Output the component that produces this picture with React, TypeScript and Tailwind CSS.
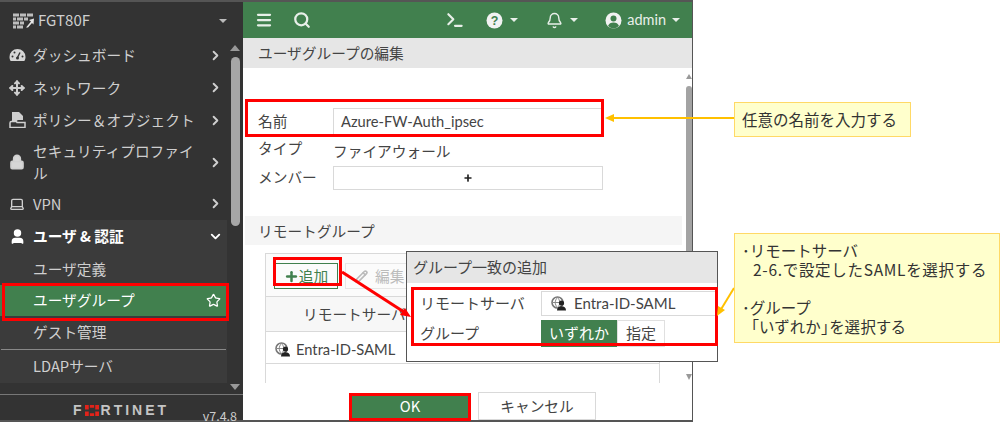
import { ChevronRight, ChevronDown, Search, Menu, Bell, Terminal, Star, Plus, Pencil, Move, Lock, Laptop, User } from 'lucide-react';
import type { ReactNode } from 'react';

function Caret({ className }: { className?: string }) {
  return <span className={`inline-block border-x-[4px] border-t-[4px] border-x-transparent border-t-current ${className ?? ''}`} />;
}

function ServerIcon() {
  return (
    <svg width="17" height="15" viewBox="0 0 17 15" className="shrink-0">
      <circle cx="6.5" cy="6.5" r="5.5" fill="#fff" stroke="#777" strokeWidth="1.6" />
      <path d="M2 6.5h9M6.5 1.5c-3 3-3 7 0 10M6.5 1.5c3 3 3 7 0 10" fill="none" stroke="#888" strokeWidth="1" />
      <circle cx="10.5" cy="7" r="2.6" fill="#222" />
      <path d="M6 14.5c0-3 2-4.2 4.5-4.2s4.5 1.2 4.5 4.2z" fill="#222" />
    </svg>
  );
}

function NavRow({ icon, label, open, bold, twoLine }: { icon: ReactNode; label: ReactNode; open?: boolean; bold?: boolean; twoLine?: boolean }) {
  return (
    <div className={`flex items-center pl-[9px] pr-[4px] ${twoLine ? 'h-[51px]' : 'h-[32.5px]'} ${bold ? 'bg-[#3b3b3b] font-bold text-white' : 'text-[#cfcfcf]'}`}>
      <span className="flex w-[24px] shrink-0 items-center">{icon}</span>
      <span className="flex-1 pr-[10px] text-[14.7px] leading-[22px]">{label}</span>
      {open ? <ChevronDown size={15} strokeWidth={3} /> : <ChevronRight size={15} strokeWidth={3} />}
    </div>
  );
}

function Sidebar() {
  return (
    <aside className="flex h-full w-[243px] shrink-0 flex-col bg-[#333333] text-[#cfcfcf]">
      <div className="flex h-[37px] shrink-0 items-center pl-[13px] pr-[16px]">
        <svg width="21" height="18" viewBox="0 0 21 17" className="mr-[4px]" fill="#bdbdbd">
          <path d="M0 1h6v3H0zM7 1h6v3H7zM14 1h6v3h-6zM0 5h3v3H0zM4 5h6v3H4zM11 5h4v3h-4zM0 9h6v3H0zM7 9h4v3H7zM0 13h3v3H0zM4 13h6v3H4z" />
          <path d="M13 15l5-6-2-1.500 5-1.500-.5 6-1.500-1.500-4 4.500z" fill="#e6e6e6" />
        </svg>
        <span className="flex-1 text-[15px]">FGT80F</span>
        <Caret className="text-[#bbb]" />
      </div>
      <div className="flex min-h-0 flex-1">
        <nav className="min-w-0 flex-1 overflow-hidden">
          <NavRow
            icon={
              <svg width="17" height="14" viewBox="0 0 17 14" fill="#d6d6d6">
                <path d="M8.500 1a8 8 0 0 0-8 8c0 1.700.5 3 1.200 4h13.600c.7-1 1.200-2.300 1.200-4a8 8 0 0 0-8-8z" />
                <path d="M8.500 9.500L11 4.500" stroke="#333" strokeWidth="1.400" />
                <circle cx="3.500" cy="8.500" r="1" fill="#333" />
                <circle cx="5.500" cy="4.500" r="1" fill="#333" />
                <circle cx="13.500" cy="8.500" r="1" fill="#333" />
                <circle cx="8.500" cy="10" r="1.500" fill="#333" />
              </svg>
            }
            label="ダッシュボード"
          />
          <NavRow icon={<Move size={16} strokeWidth={3} />} label="ネットワーク" />
          <NavRow
            icon={
              <svg width="17" height="16" viewBox="0 0 17 16" fill="#cfcfcf">
                <path d="M3 0h7l4 4v4H9.500c-1.500 0-2 1-2 2H3z" />
                <path d="M1 11c0-1 .5-1.500 1.500-1.500h5l.5 1h8v5H1z" fill="none" stroke="#cfcfcf" strokeWidth="1.500" />
              </svg>
            }
            label="ポリシー＆オブジェクト"
          />
          <NavRow icon={<Lock size={16} strokeWidth={2.5} fill="#d6d6d6" />} label="セキュリティプロファイル" twoLine />
          <NavRow icon={<Laptop size={16} strokeWidth={2} />} label="VPN" />
          <NavRow icon={<User size={17} strokeWidth={2.5} fill="#fff" />} label="ユーザ & 認証" open bold />
          <div className="bg-[#3b3b3b] text-[14.7px]">
            <div className="flex h-[32.5px] items-center pl-[33px]">ユーザ定義</div>
            <div className="flex h-[31px] items-center justify-between bg-[#41804e] pl-[33px] pr-[6px] text-white">
              ユーザグループ
              <Star size={15} strokeWidth={2} />
            </div>
            <div className="flex h-[33px] items-center pl-[33px]">ゲスト管理</div>
            <div className="mx-[1px] h-px bg-[#888]" />
            <div className="flex h-[33px] items-center pl-[33px]">LDAPサーバ</div>
          </div>
        </nav>
        <div className="flex w-[16px] shrink-0 flex-col items-center bg-[#333333] text-[#999]">
          <span className="mt-[6px] border-x-[5px] border-b-[6px] border-x-transparent border-b-[#999]" />
          <span className="mt-[6px] h-[169px] w-[9px] rounded-full bg-[#a6a6a6]" />
          <span className="mt-auto mb-[4px] border-x-[5px] border-t-[6px] border-x-transparent border-t-[#999]" />
        </div>
      </div>
      <div className="flex h-[26px] shrink-0 items-end justify-between border-t border-[#777] pl-[73px] pr-[6px]">
        <span className="mb-[2px] flex items-center font-['Liberation_Sans',sans-serif] text-[14px] font-bold leading-[16px] tracking-[3px] text-[#c4c4c4]">
          F
          <svg width="14" height="11" viewBox="0 0 13 10" className="mr-[2px]" fill="#e2231a">
            <path d="M0 0h3.500v4H0zM4.500 0h4v2.500h-4zM9.500 0H13v4H9.500zM0 6h3.500v4H0zM4.500 7.500h4V10h-4zM9.500 6H13v4H9.500z" />
          </svg>
          RTINET
        </span>
        <span className="mb-[-3px] text-[12.5px] leading-[15px] text-[#ccc]">v7.4.8</span>
      </div>
    </aside>
  );
}

function TopBar() {
  return (
    <header className="flex h-[36px] shrink-0 items-center bg-[#41804e] pl-[12px] pr-[12px] text-[#e8efe9]">
      <Menu size={18} strokeWidth={3} />
      <Search size={18} strokeWidth={3} className="ml-[20px]" />
      <Terminal size={20} strokeWidth={2.5} className="ml-auto" />
      <svg width="17" height="17" viewBox="0 0 17 17" className="ml-[21px]">
        <circle cx="8.500" cy="8.500" r="8" fill="#f2f2f2" />
        <text x="8.500" y="13" textAnchor="middle" fontSize="12.500" fontWeight="700" fill="#41804e" fontFamily="Liberation Sans">?</text>
      </svg>
      <Caret className="ml-[7px]" />
      <Bell size={17} strokeWidth={2} className="ml-[28px]" />
      <Caret className="ml-[7px]" />
      <svg width="17" height="17" viewBox="0 0 17 17" className="ml-[27px]">
        <circle cx="8.500" cy="8.500" r="8" fill="#f2f2f2" />
        <circle cx="8.500" cy="6.500" r="3" fill="#41804e" />
        <path d="M3 14c.8-2.500 3-3.500 5.500-3.500s4.700 1 5.500 3.500a7.500 7.500 0 0 1-11 0z" fill="#41804e" />
      </svg>
      <span className="ml-[5px] font-['Lato',sans-serif] text-[14.5px]">admin</span>
      <Caret className="ml-[6px]" />
    </header>
  );
}

function Form() {
  return (
    <div className="relative min-h-0 flex-1 overflow-hidden bg-white text-[14.7px] text-[#444]">
      <div className="flex h-[30px] items-center bg-[#e6e6e6] pl-[15px]">ユーザグループの編集</div>
      <div className="mt-[40px] flex h-[27px] items-center pl-[15px]">
        <span className="w-[75px]">名前</span>
        <div className="flex h-[27px] w-[270px] items-center border border-[#d9d9d9] pl-[7px] font-['Lato',sans-serif]">Azure-FW-Auth_ipsec</div>
      </div>
      <div className="mt-[2px] flex h-[26px] items-center pl-[15px]">
        <span className="mb-[3px] w-[75px]">タイプ</span>
        <span className="mt-[2px]">ファイアウォール</span>
      </div>
      <div className="mt-[2px] flex h-[25px] items-center pl-[15px]">
        <span className="w-[75px]">メンバー</span>
        <div className="flex h-[24px] w-[270px] items-center justify-center border border-[#d9d9d9] text-[#222]">
          <Plus size={10} strokeWidth={4} />
        </div>
      </div>
      <div className="ml-[2px] mr-[10px] mt-[26px] flex h-[29px] items-center bg-[#f5f5f5] pl-[13px] pt-[1px]">リモートグループ</div>
      <div className="ml-[22px] mr-[32px] mt-[8px] border border-[#d9d9d9]">
        <div className="flex h-[42px] items-center gap-[7px] bg-[#fbfbfb] pl-[8px] pt-[2px]">
          <div className="flex h-[26px] w-[64px] items-center justify-center border border-[#41804e] text-[#41804e]">
            <Plus size={15} strokeWidth={4} />
            追加
          </div>
          <div className="flex h-[26px] w-[70px] items-center gap-[7px] border border-[#e6e6e6] pl-[9px] text-[#bbb]">
            <Pencil size={13} strokeWidth={3} />
            編集
          </div>
        </div>
        <div className="flex h-[36px] items-center border-y border-[#d9d9d9] bg-[#f7f7f7] pl-[37px] pt-[1px]">リモートサーバ</div>
        <div className="flex h-[32px] items-center gap-[4px] border-b border-[#d9d9d9] pl-[9px] pt-[3px] font-['Lato',sans-serif]">
          <ServerIcon />
          Entra-ID-SAML
        </div>
        <div className="h-[60px]" />
      </div>
    </div>
  );
}

function MainScrollbar() {
  return (
    <div className="absolute right-0 top-[72px] flex h-[306px] w-[6px] flex-col items-center">
      <span className="border-x-[3px] border-b-[5px] border-x-transparent border-b-[#999]" />
      <span className="mt-[7px] h-[262px] w-[6px] rounded-t-full bg-[#a3a3a3]" />
      <span className="mt-auto border-x-[3px] border-t-[6px] border-x-transparent border-t-[#999]" />
    </div>
  );
}

function Main() {
  return (
    <main className="relative flex h-full w-[450px] shrink-0 flex-col border-r border-[#555] bg-white">
      <TopBar />
      <Form />
      <MainScrollbar />
      <footer className="flex h-[37px] shrink-0 items-end justify-center gap-[10px] bg-white pl-[13px] text-[14.7px]">
        <button className="h-[27px] w-[116px] bg-[#41804e] text-white">OK</button>
        <button className="h-[28px] w-[118px] border border-[#d9d9d9] text-[#444]">キャンセル</button>
      </footer>
    </main>
  );
}

function Dialog() {
  return (
    <div className="absolute left-[406px] top-[251px] h-[111px] w-[312px] border border-[#555] bg-white text-[15px] text-[#444]">
      <div className="flex h-[31px] items-center bg-[#e6e6e6] pl-[6px]">グループ一致の追加</div>
      <div className="mt-[8px] flex h-[25px] items-center">
        <span className="w-[134px] pl-[13px]">リモートサーバ</span>
        <div className="flex h-[25px] flex-1 items-center gap-[6px] border border-[#d9d9d9] pl-[9px] font-['Lato',sans-serif]">
          <ServerIcon />
          Entra-ID-SAML
        </div>
      </div>
      <div className="mt-[4px] flex h-[27px] items-center">
        <span className="w-[134px] pl-[13px]">グループ</span>
        <div className="flex h-[27px] w-[76px] items-center justify-center bg-[#41804e] text-white">いずれか</div>
        <div className="flex h-[27px] w-[48px] items-center justify-center border border-[#e0e0e0]">指定</div>
      </div>
    </div>
  );
}

function RedBox({ className }: { className: string }) {
  return <div className={`absolute border-[3px] border-[#ff0000] ${className}`} />;
}

function Note({ className, children }: { className: string; children: ReactNode }) {
  return <div className={`absolute border-[1.5px] border-[#ffd966] bg-[#ffffcc] text-[15.5px] text-[#333] ${className}`}>{children}</div>;
}

function Annotations() {
  return (
    <>
      <RedBox className="left-[245px] top-[99px] h-[38px] w-[359px]" />
      <RedBox className="left-[2px] top-[283px] h-[38px] w-[227px]" />
      <RedBox className="left-[273px] top-[257px] h-[29px] w-[69px]" />
      <RedBox className="left-[411px] top-[287px] h-[59px] w-[307px]" />
      <RedBox className="left-[349px] top-[393px] h-[28px] w-[122px]" />
      <svg className="pointer-events-none absolute left-0 top-0" width="1000" height="422">
        <path d="M342 272L404 312" stroke="#ff0000" strokeWidth="3" />
        <path d="M411 317l-11-2 5-7z" fill="#ff0000" />
        <path d="M612 118H734" stroke="#ffc000" strokeWidth="2" />
        <path d="M605 118l9-4v8z" fill="#ffc000" />
        <path d="M734 288L720 311" stroke="#ffc000" strokeWidth="2" />
        <path d="M717 316l1-10 7 4z" fill="#ffc000" />
      </svg>
      <Note className="left-[734px] top-[102px] flex h-[35px] w-[177px] items-center pl-[7px]">任意の名前を入力する</Note>
      <Note className="left-[734px] top-[233px] h-[110px] w-[266px] pl-[7px] pt-[7px] leading-[19px]">
        <div>･リモートサーバ</div>
        <div className="pl-[11px] tracking-[0.7px]">2-6.で設定したSAMLを選択する</div>
        <div className="mt-[19px]">･グループ</div>
        <div className="pl-[9px] tracking-[0.6px] [font-feature-settings:'palt']">「いずれか」を選択する</div>
      </Note>
    </>
  );
}

export default function App() {
  return (
    <div className="relative h-[422px] w-[1000px] overflow-hidden bg-white font-['Noto_Sans_CJK_JP',sans-serif]">
      <div className="flex h-[422px] w-[693px] border-y-2 border-[#555]">
        <Sidebar />
        <Main />
      </div>
      <Dialog />
      <Annotations />
    </div>
  );
}
